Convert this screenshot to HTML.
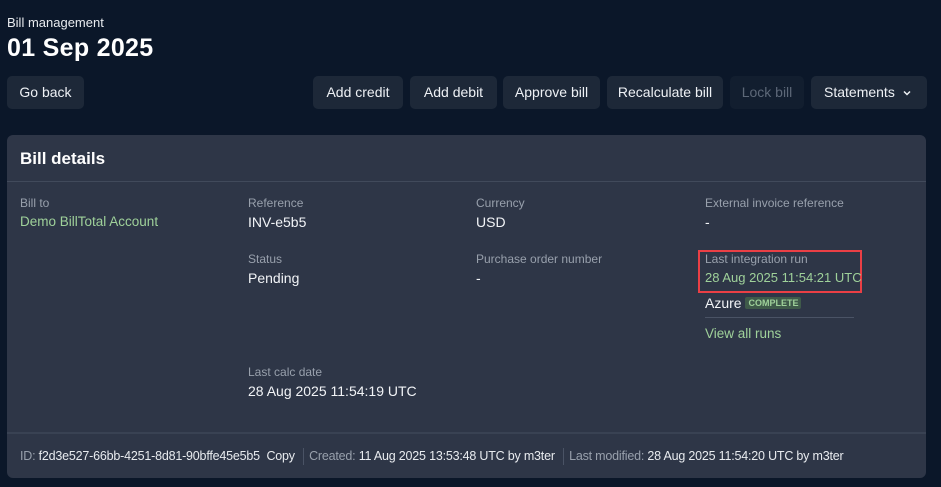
<!DOCTYPE html>
<html><head><style>
*{margin:0;padding:0;box-sizing:border-box}
body{width:941px;height:487px;background:#0b1729;font-family:"Liberation Sans",sans-serif;color:#fff;position:relative;overflow:hidden}
.a{position:absolute;white-space:nowrap}
.btn{position:absolute;top:76px;height:33px;background:#1d2838;border-radius:5px;font-size:14px;line-height:33px;text-align:center;color:#eef1f5}
.card{position:absolute;left:7px;top:135px;width:919px;height:343px;background:#2e3647;border-radius:6px}
.lbl{position:absolute;font-size:12px;color:#98a0ac;white-space:nowrap}
.val{position:absolute;font-size:14px;color:#f2f4f7;white-space:nowrap}
.g{color:#9fd19a}
</style></head><body>
<div class="a" style="left:7px;top:15px;font-size:13px;color:#e8ebef">Bill management</div>
<div class="a" style="left:7px;top:34px;font-size:25px;font-weight:bold;letter-spacing:0.3px">01 Sep 2025</div>
<div class="btn" style="left:7px;width:77px">Go back</div>
<div class="btn" style="left:313px;width:90px">Add credit</div>
<div class="btn" style="left:410px;width:87px">Add debit</div>
<div class="btn" style="left:503px;width:97px">Approve bill</div>
<div class="btn" style="left:607px;width:116px">Recalculate bill</div>
<div class="btn" style="left:730px;width:74px;background:#121e2f;color:#5d6878">Lock bill</div>
<div class="btn" style="left:811px;width:116px;text-align:left;padding-left:13px">Statements <svg style="position:absolute;left:92px;top:14px" width="8" height="6" viewBox="0 0 8 6"><path d="M1 1.5L4 4.5L7 1.5" stroke="#eef1f5" stroke-width="1.5" fill="none"/></svg></div>
<div class="card">
  <div class="a" style="left:13px;top:14px;font-size:17px;font-weight:bold">Bill details</div>
  <div class="a" style="left:0;top:46px;width:919px;height:1px;background:#414a5b"></div>
  <div class="lbl" style="left:13px;top:61px">Bill to</div>
  <div class="val g" style="left:13px;top:79px;font-size:13.5px">Demo BillTotal Account</div>
  <div class="lbl" style="left:241px;top:61px">Reference</div>
  <div class="val" style="left:241px;top:79px">INV-e5b5</div>
  <div class="lbl" style="left:469px;top:61px">Currency</div>
  <div class="val" style="left:469px;top:79px">USD</div>
  <div class="lbl" style="left:698px;top:61px">External invoice reference</div>
  <div class="val" style="left:698px;top:79px">-</div>
  <div class="lbl" style="left:241px;top:117px">Status</div>
  <div class="val" style="left:241px;top:135px">Pending</div>
  <div class="lbl" style="left:469px;top:117px">Purchase order number</div>
  <div class="val" style="left:469px;top:135px">-</div>
  <div class="a" style="left:691px;top:115px;width:164px;height:43px;border:2px solid #ea3f45"></div>
  <div class="lbl" style="left:698px;top:117px">Last integration run</div>
  <div class="val g" style="left:698px;top:135px;font-size:13px">28 Aug 2025 11:54:21 UTC</div>
  <div class="val" style="left:698px;top:160px">Azure <span style="display:inline-block;background:#3f5a4a;color:#9fd19a;font-size:9px;font-weight:bold;padding:1px 3px;border-radius:2px;vertical-align:2px">COMPLETE</span></div>
  <div class="a" style="left:698px;top:182px;width:149px;height:1px;background:#4a5365"></div>
  <div class="val g" style="left:698px;top:191px;font-size:13.5px">View all runs</div>
  <div class="lbl" style="left:241px;top:230px">Last calc date</div>
  <div class="val" style="left:241px;top:248px">28 Aug 2025 11:54:19 UTC</div>
  <div class="a" style="left:0;top:297px;width:919px;height:2px;background:#394253"></div>
  <div class="a" style="left:13px;top:313px;font-size:12.5px;color:#e8ebef;letter-spacing:-0.2px"><span style="color:#98a0ac">ID:</span> f2d3e527-66bb-4251-8d81-90bffe45e5b5&nbsp; Copy <span style="display:inline-block;width:1px;height:17px;background:#4a5365;vertical-align:middle;margin:0 5px"></span><span style="color:#98a0ac">Created:</span> 11 Aug 2025 13:53:48 UTC by m3ter <span style="display:inline-block;width:1px;height:17px;background:#4a5365;vertical-align:middle;margin:0 5px"></span><span style="color:#98a0ac">Last modified:</span> 28 Aug 2025 11:54:20 UTC by m3ter</div>
</div>
</body></html>
